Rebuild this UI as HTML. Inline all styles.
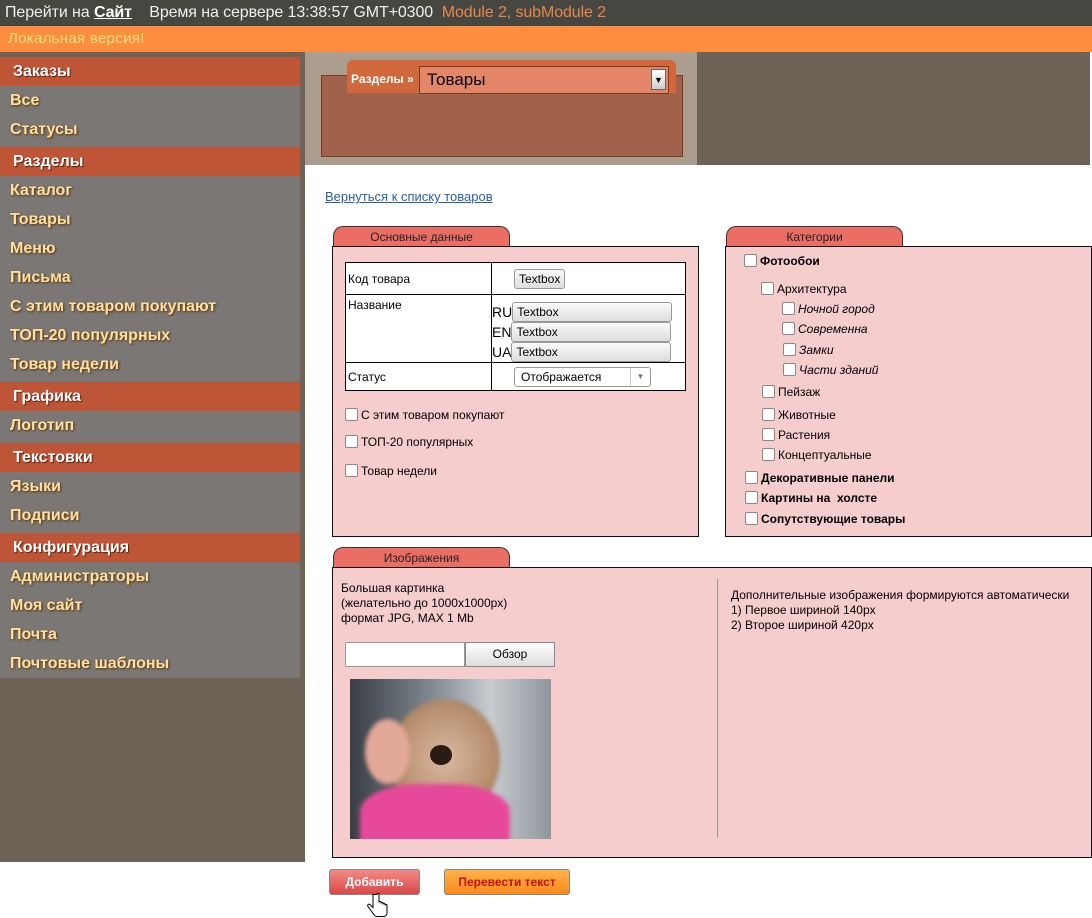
<!DOCTYPE html>
<html><head><meta charset="utf-8"><style>
*{margin:0;padding:0;box-sizing:border-box}
body{width:1092px;height:918px;position:relative;background:#fff;font-family:"Liberation Sans",Arial,sans-serif;overflow:hidden;font-size:12px;color:#000}
.abs{position:absolute}
#top{left:0;top:0;width:1092px;height:26px;background:#474741;color:#eee;font-size:16px;line-height:25px;padding-left:5px;white-space:nowrap;letter-spacing:-0.1px}
#top b{color:#fff;text-decoration:underline}
#orange{left:0;top:26px;width:1092px;height:26px;background:#ff8d3f;color:#ffe07a;font-size:15px;line-height:26px;padding-left:8px;letter-spacing:0.3px}
#side{left:0;top:52px;width:305px;height:810px;background:#6f6256}
#menu{left:0;top:57px;width:300px;background:#7a7775}
.h{height:29px;margin-top:3px;background:#bf5537;color:#fff;font-weight:bold;font-size:16px;line-height:29px;padding-left:13px;text-shadow:1px 1px 1px #5a2010}
.h.first{margin-top:0}
.i{height:29px;color:#ffe0a0;font-weight:bold;font-size:16px;line-height:29px;padding-left:10px;text-shadow:1px 1px 2px #5a3000}
#hdr1{left:305px;top:52px;width:392px;height:113px;background:#ab9e8e}
#hdr2{left:697px;top:52px;width:393px;height:113px;background:#6e6256}
#box{left:321px;top:75px;width:362px;height:82px;background:#a0624a;border:1px solid #7a3a20}
#tab{left:347px;top:60px;width:329px;height:33px;background:#d0683c;border-radius:6px 6px 0 0}
#tab span{position:absolute;left:4px;top:12px;color:#fff;font-weight:bold;font-size:12px}
#sel{left:419px;top:66px;width:250px;height:28px;background:#e38668;border:1px solid #7a3a20;font-size:17px;line-height:26px;padding-left:7px}
#sel i{position:absolute;right:2px;top:2px;width:15px;height:21px;background:linear-gradient(#fff,#ccc);border:1px solid #666;font-style:normal;font-size:9px;line-height:20px;text-align:center}
a{color:#2a5db0;text-decoration:underline}
.ptab{height:21px;width:177px;background:#ea6e64;border:1px solid #333;border-bottom:none;border-radius:10px 10px 0 0;text-align:center;font-size:12px;line-height:21px;color:#222}
.pbox{background:#f5cdcc;border:1px solid #111}
table{border-collapse:collapse;position:absolute;left:12px;top:15px;width:341px;background:#fff}
td{border:1px solid #000;vertical-align:top;font-size:12px;padding:0 2px}
.tb{display:inline-block;background:linear-gradient(#fafafa,#ddd);border:1px solid #999;border-radius:3px;font-size:12px;height:20px;line-height:18px;padding:0 4px}
.cb{display:inline-block;width:13px;height:13px;background:#fff;border:1px solid #888;border-radius:2px;vertical-align:-2px;margin-right:3px}
.row{position:absolute;font-size:12px;white-space:nowrap}
.btn{height:26px;border:1px solid #888;border-radius:3px;font-weight:bold;font-size:12px;text-align:center;line-height:24px}
</style></head><body>
<div id="top" class="abs">Перейти на <b>Сайт</b> &nbsp;&nbsp; Время на сервере 13:38:57 GMT+0300 &nbsp;<span style="color:#e8864a">Module 2, subModule 2</span></div>
<div id="orange" class="abs">Локальная версия!</div>
<div id="side" class="abs"></div>
<div id="menu" class="abs">
<div class="h first">Заказы</div><div class="i">Все</div><div class="i">Статусы</div>
<div class="h">Разделы</div><div class="i">Каталог</div><div class="i">Товары</div><div class="i">Меню</div><div class="i">Письма</div><div class="i">С этим товаром покупают</div><div class="i">ТОП-20 популярных</div><div class="i">Товар недели</div>
<div class="h">Графика</div><div class="i">Логотип</div>
<div class="h">Текстовки</div><div class="i">Языки</div><div class="i">Подписи</div>
<div class="h">Конфигурация</div><div class="i">Администраторы</div><div class="i">Моя сайт</div><div class="i">Почта</div><div class="i">Почтовые шаблоны</div>
</div>
<div id="hdr1" class="abs"></div><div id="hdr2" class="abs"></div>
<div id="box" class="abs"></div>
<div id="tab" class="abs"><span>Разделы »</span></div>
<div id="sel" class="abs">Товары<i>▼</i></div>
<a class="abs" style="left:325px;top:189px;font-size:13px">Вернуться к списку товаров</a>

<div class="abs ptab" style="left:333px;top:226px">Основные данные</div>
<div class="abs pbox" style="left:332px;top:246px;width:367px;height:291px">
<table>
<tr style="height:32px"><td style="width:146px;vertical-align:middle">Код товара</td><td style="padding-left:22px;vertical-align:middle"><span class="tb">Textbox</span></td></tr>
<tr style="height:68px"><td style="padding-top:3px">Название</td><td style="font-size:14px;line-height:20px;padding-top:7px;padding-left:0">
<div>RU<span class="tb" style="width:160px;vertical-align:top">Textbox</span></div><div>EN<span class="tb" style="width:160px;vertical-align:top">Textbox</span></div><div>UA<span class="tb" style="width:160px;vertical-align:top">Textbox</span></div></td></tr>
<tr style="height:28px"><td style="vertical-align:middle">Статус</td><td style="padding-left:22px;vertical-align:middle"><span class="tb" style="width:137px;background:#fff;padding-left:6px;position:relative">Отображается<span style="position:absolute;right:0;top:0;width:20px;height:18px;border-left:1px solid #ccc;font-size:8px;color:#777;text-align:center">▼</span></span></td></tr>
</table>
<div class="row" style="left:12px;top:161px"><span class="cb"></span>С этим товаром покупают</div>
<div class="row" style="left:12px;top:188px"><span class="cb"></span>ТОП-20 популярных</div>
<div class="row" style="left:12px;top:217px"><span class="cb"></span>Товар недели</div>
</div>

<div class="abs ptab" style="left:726px;top:226px">Категории</div>
<div class="abs pbox" style="left:725px;top:246px;width:367px;height:291px">
<div class="row" style="left:18px;top:7px;font-weight:bold"><span class="cb"></span>Фотообои</div>
<div class="row" style="left:35px;top:35px"><span class="cb"></span>Архитектура</div>
<div class="row" style="left:56px;top:55px;font-style:italic"><span class="cb"></span>Ночной город</div>
<div class="row" style="left:56px;top:75px;font-style:italic"><span class="cb"></span>Современна</div>
<div class="row" style="left:57px;top:96px;font-style:italic"><span class="cb"></span>Замки</div>
<div class="row" style="left:57px;top:116px;font-style:italic"><span class="cb"></span>Части зданий</div>
<div class="row" style="left:36px;top:138px"><span class="cb"></span>Пейзаж</div>
<div class="row" style="left:36px;top:161px"><span class="cb"></span>Животные</div>
<div class="row" style="left:36px;top:181px"><span class="cb"></span>Растения</div>
<div class="row" style="left:36px;top:201px"><span class="cb"></span>Концептуальные</div>
<div class="row" style="left:19px;top:224px;font-weight:bold"><span class="cb"></span>Декоративные панели</div>
<div class="row" style="left:19px;top:244px;font-weight:bold"><span class="cb"></span>Картины на &nbsp;холсте</div>
<div class="row" style="left:19px;top:265px;font-weight:bold"><span class="cb"></span>Сопутствующие товары</div>
</div>

<div class="abs ptab" style="left:333px;top:547px">Изображения</div>
<div class="abs pbox" style="left:332px;top:567px;width:760px;height:291px">
<div class="row" style="left:8px;top:13px;line-height:15px">Большая картинка<br>(желательно до 1000x1000px)<br>формат JPG, MAX 1 Mb</div>
<div class="abs" style="left:12px;top:74px;width:120px;height:25px;background:#fff;border:1px solid #999;border-radius:2px 0 0 2px"></div>
<div class="abs" style="left:132px;top:74px;width:90px;height:25px;background:linear-gradient(#fff,#ddd);border:1px solid #888;text-align:center;line-height:23px">Обзор</div>
<div class="abs" style="left:17px;top:111px;width:201px;height:160px;overflow:hidden;background:linear-gradient(90deg,#3a3e44,#7f8790 40%,#c8ccd0 70%,#8e969c)">
<div class="abs" style="left:40px;top:20px;width:110px;height:120px;border-radius:50%;background:radial-gradient(#d9b8a0,#b89070 60%,#8a6a50);filter:blur(2px)"></div>
<div class="abs" style="left:15px;top:40px;width:45px;height:65px;border-radius:50%;background:#e2a898;filter:blur(2px)"></div>
<div class="abs" style="left:80px;top:66px;width:22px;height:20px;border-radius:50%;background:#2a1c14"></div>
<div class="abs" style="left:10px;top:105px;width:150px;height:70px;border-radius:40% 40% 0 0;background:#e8489a;filter:blur(2px)"></div>
</div>
<div class="abs" style="left:384px;top:11px;width:1px;height:259px;background:#999"></div>
<div class="row" style="left:398px;top:20px;line-height:15px">Дополнительные изображения формируются автоматически<br>1) Первое шириной 140px<br>2) Второе шириной 420px</div>
</div>

<div class="abs btn" style="left:329px;top:869px;width:91px;background:linear-gradient(#f48a86,#d84848);color:#fff">Добавить</div>
<div class="abs btn" style="left:444px;top:869px;width:126px;background:linear-gradient(#ffb24a,#f98a1c);color:#c0120a">Перевести текст</div>
<svg class="abs" style="left:366px;top:893px" width="26" height="25" viewBox="0 0 26 25"><path d="M7 1.5v13l-3-3c-1.5-1-3 .5-2 2l5 7c1 1.5 2 3 4 3h7c2 0 3-2 3-4v-7c0-1.5-2-1.5-2 0v-1c0-1.5-2-1.5-2 0v-1c0-1.5-2-1.5-2 0v-1c0-1.5-2-1.5-2 0v-8c0-1.5-2-1.5-2 0z" fill="#fff" stroke="#000" stroke-width="1"/></svg>
</body></html>
